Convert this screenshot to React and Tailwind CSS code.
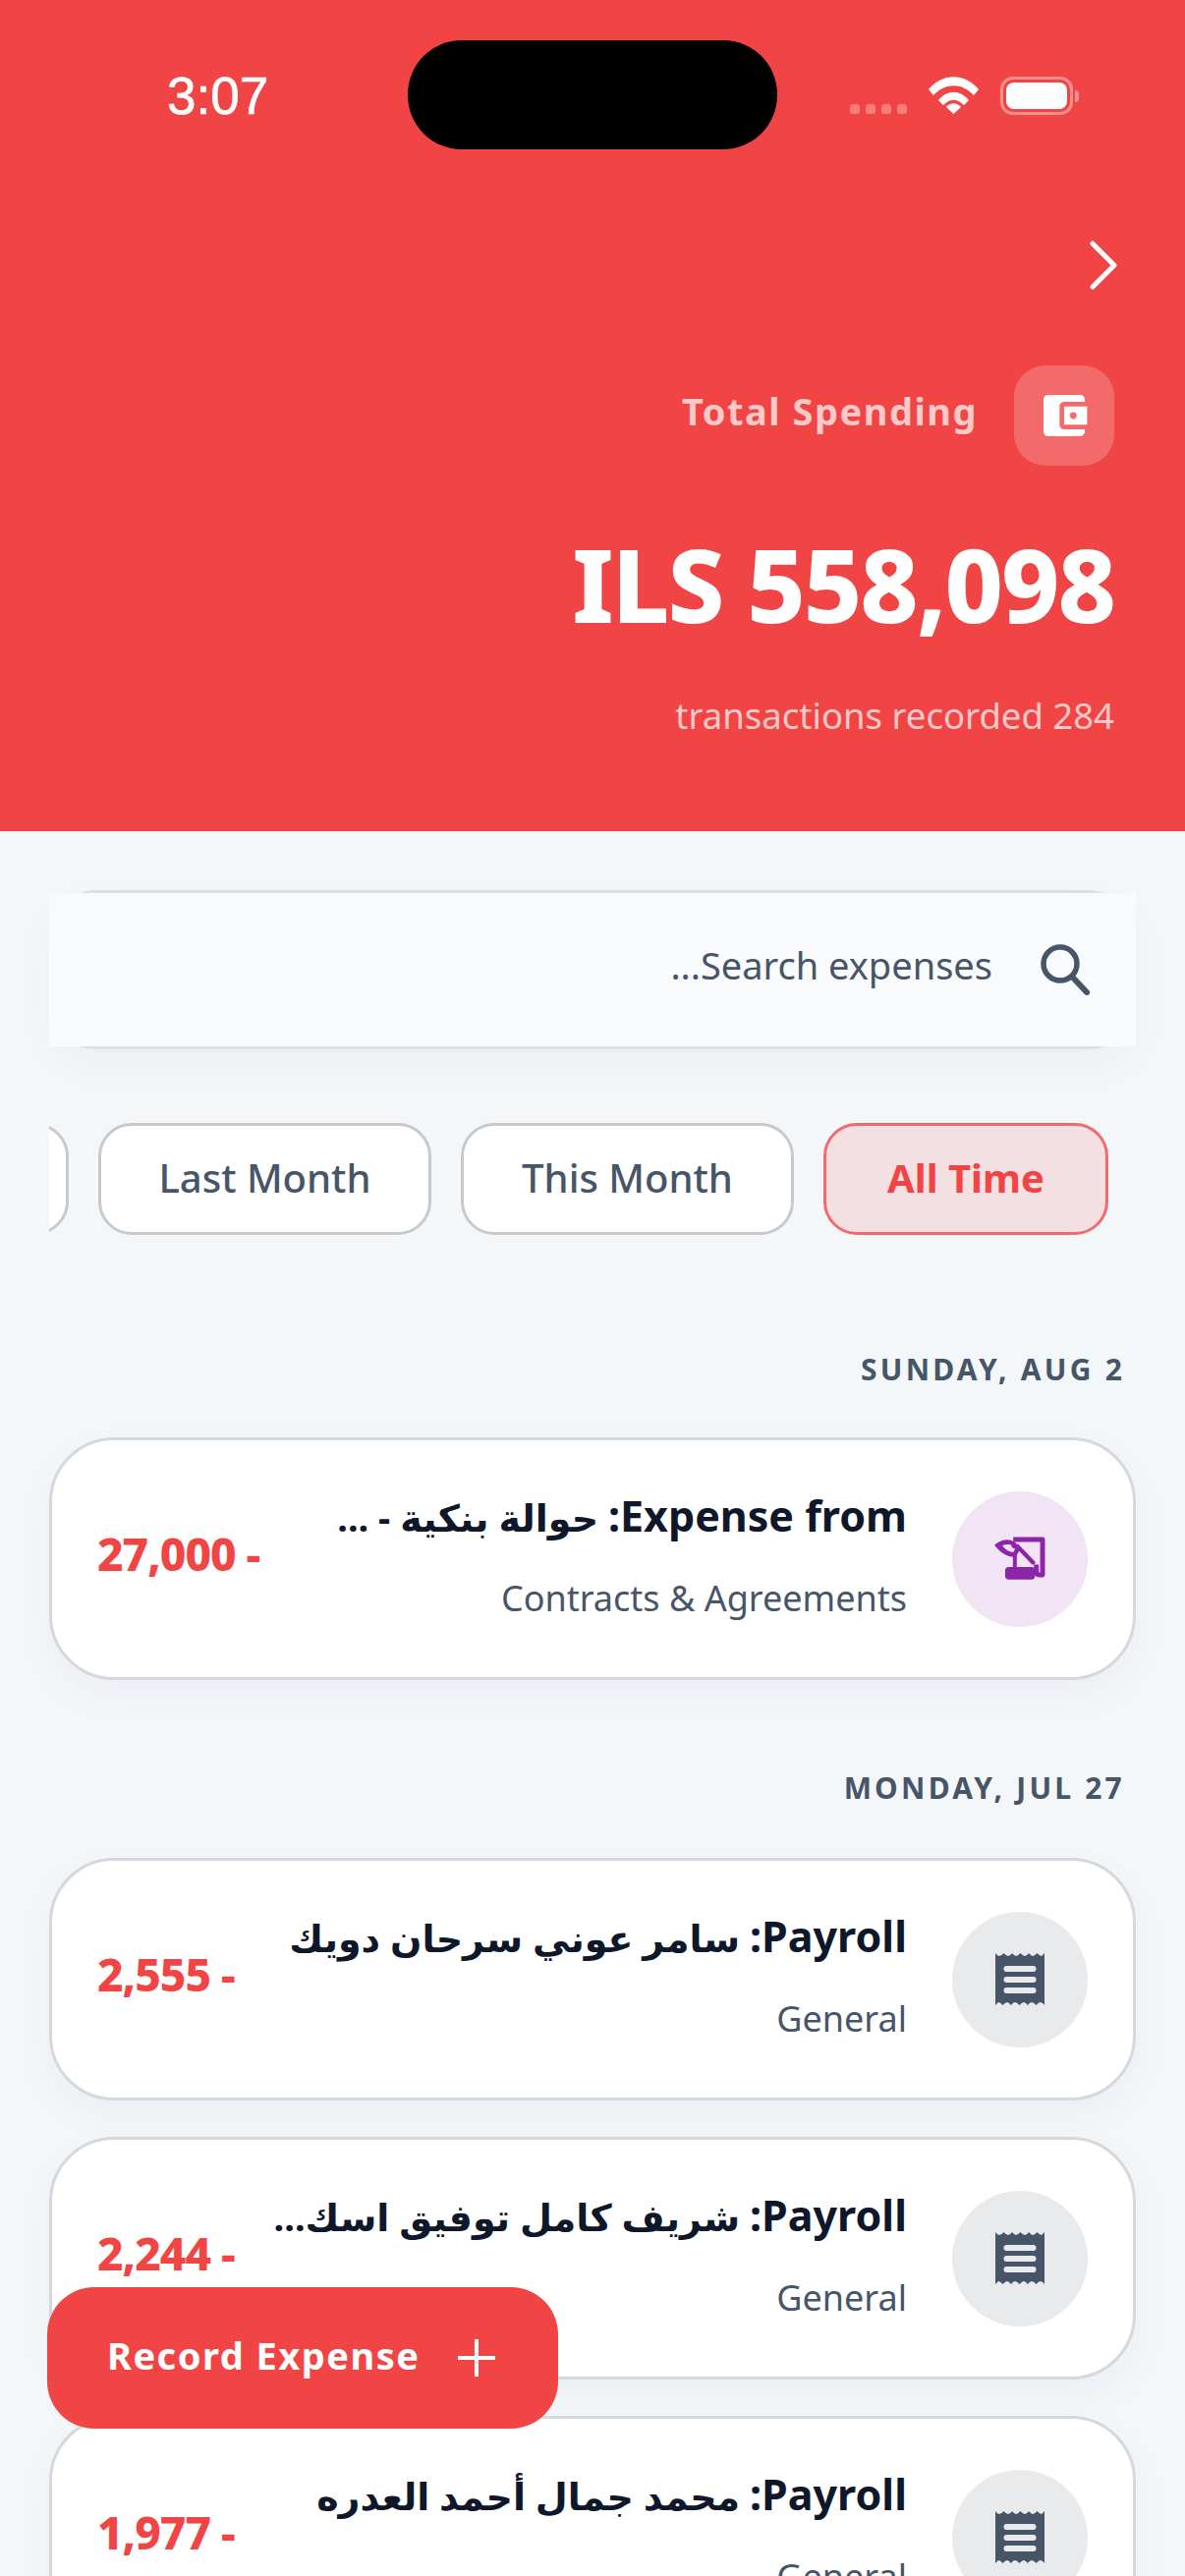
import React from "react";
import { MdAccountBalanceWallet } from "react-icons/md";

const FONT = "[font-family:'Noto_Sans','DejaVu_Sans',sans-serif]";

function Receipt() {
  return (
    <svg width="50" height="53" viewBox="0 0 50 53">
      <path
        fill="#475569"
        d="M0 0 Q2 3 4 3 T8.5 0 Q11 3 13 3 T17 0 Q19.5 3 21 3 T25.5 0 Q28 3 30 3 T34 0 Q36.5 3 38 3 T42.5 0 Q45 3 47 3 L50 0 V53 Q48 50 46 50 T41.5 53 Q39 50 37 50 T33 53 Q30.5 50 29 50 T24.5 53 Q22 50 20 50 T16 53 Q13.5 50 12 50 T7.5 53 Q5 50 3 50 L0 53 Z"
      />
      <rect x="8.5" y="13" width="33" height="6" rx="3" fill="#e9eaec" />
      <rect x="8.5" y="24" width="33" height="6" rx="3" fill="#e9eaec" />
      <rect x="8.5" y="35" width="33" height="6" rx="3" fill="#e9eaec" />
    </svg>
  );
}

function Quill() {
  return (
    <svg width="58" height="48" viewBox="205 190 175 145" className="mt-[-2px]">
      <path d="M272 205 H362 V314 H352 Q343 314 343 305 V282" fill="none" stroke="#8e24aa" strokeWidth="15" strokeLinejoin="round" />
      <rect x="247" y="290" width="92" height="38" rx="11" fill="#8e24aa" />
      <path d="M285 226 L333 276" stroke="#8e24aa" strokeWidth="13" strokeLinecap="round" />
      <path d="M277 250 V295" stroke="#8e24aa" strokeWidth="12" />
      <path d="M214 222 Q236 202 265 207 Q287 214 291 236 Q286 257 270 259 Q238 255 214 222 Z" fill="#8e24aa" />
      <path d="M238 224 Q254 218 266 222 L268 230 L278 234 L272 244 Q252 242 238 224 Z" fill="#f1e4f5" />
    </svg>
  );
}

function Card({ latin, arabic, sub, amount, purple }) {
  return (
    <div className="flex h-[247px] shrink-0 items-center rounded-[66px] border-[3px] border-[#d5d8dc] bg-white pl-[46px] pr-[46px] shadow-[0_16px_40px_rgba(15,23,42,0.04)]">
      <div
        className={`flex h-[138px] w-[138px] shrink-0 items-center justify-center rounded-full ${purple ? "bg-[#f1e4f5]" : "bg-[#e9eaec]"}`}
      >
        {purple ? <Quill /> : <Receipt />}
      </div>
      <div className="ml-[46px] mr-[46px] flex min-w-0 flex-1 flex-col gap-[23px] pb-[4px]">
        <div className="whitespace-nowrap text-[38px] font-bold leading-[60px] text-[#0f172a]">
          <span className="text-[43px]">{latin}</span> {arabic}
        </div>
        <div className="whitespace-nowrap text-[36px] leading-[60px] text-[#475569]">{sub}</div>
      </div>
      <div className="mb-[12px] shrink-0 text-[46px] font-extrabold leading-[60px] tracking-[-1px] text-[#f14545]">
        {amount}
      </div>
    </div>
  );
}

function Pill({ w, children, active }) {
  return (
    <div
      className={`flex h-[114px] shrink-0 items-center justify-center rounded-[34px] border-[3px] pb-[3px] text-[40px] ${
        active
          ? "border-[#f26a6a] bg-[#f4e0e3] font-bold text-[#f14545]"
          : "border-[#c9c9c9] bg-white font-medium text-[#475569]"
      } ${w}`}
    >
      {children}
    </div>
  );
}

export default function App() {
  return (
    <div className={`relative h-[2622px] w-[1206px] overflow-hidden bg-[#f4f7fa] ${FONT}`} dir="rtl">
      <header className="h-[846px] bg-[#f14545]" dir="ltr">
        <div className="flex h-[152px] pt-[41px]">
          <div className="w-[415px] pl-[170px] pt-[32px] text-[53px] leading-[50px] text-white [-webkit-text-stroke:0.7px_white] [font-family:'Liberation_Sans',sans-serif]">
            3:07
          </div>
          <div className="h-[111px] w-[376px] rounded-[55px] bg-black" />
          <div className="flex items-start pl-[74px] pt-[37px]">
            <div className="mt-[28px] flex gap-[6px]">
              <span className="h-[10px] w-[10px] rounded-[3px] bg-white/30" />
              <span className="h-[10px] w-[10px] rounded-[3px] bg-white/30" />
              <span className="h-[10px] w-[10px] rounded-[3px] bg-white/30" />
              <span className="h-[10px] w-[10px] rounded-[3px] bg-white/30" />
            </div>
            <svg className="ml-[22px]" width="51" height="38" viewBox="0 0 51 38">
              <path fill="white" d="M0 13 C14 -4 37 -4 51 13 L46 19 C34 6 17 6 5 19 Z" />
              <path fill="white" d="M10 24 C19 13 32 13 41 24 L36 29 C29 22 22 22 15 29 Z" />
              <path fill="white" d="M18 31 C22 26 29 26 33 31 L25.5 38 Z" />
            </svg>
            <div className="ml-[22px] flex items-center">
              <div className="h-[39px] w-[74px] rounded-[13px] border-[3px] border-white/40 p-[3px]">
                <div className="h-full w-full rounded-[8px] bg-white" />
              </div>
              <div className="ml-[2px] h-[12px] w-[4px] rounded-r-full bg-white/40" />
            </div>
          </div>
        </div>
        <div className="flex justify-end pr-[68px] pt-[93px]">
          <svg width="30" height="50" viewBox="0 0 30 50" fill="none">
            <path d="M4 3 L26 25 L4 47" stroke="white" strokeWidth="5" strokeLinecap="round" strokeLinejoin="round" />
          </svg>
        </div>
        <div className="mt-[77px] flex items-center justify-end gap-[37px] pr-[72px]">
          <span className="mb-[10px] text-[38px] font-bold tracking-[1.5px] text-[#fcc9c9]">Total Spending</span>
          <div className="flex h-[102px] w-[102px] items-center justify-center rounded-[32px] bg-white/20">
            <MdAccountBalanceWallet className="text-white" size={56} />
          </div>
        </div>
        <div className="mt-[65px] pr-[72px] text-right text-[103px] font-extrabold leading-[110px] tracking-[-2px] text-white">
          ILS 558,098
        </div>
        <div className="mt-[54px] pr-[72px] text-right text-[36.5px] leading-[50px] text-[#fcc9c9]">
          transactions recorded 284
        </div>
      </header>

      <main className="px-[50px]">
        <div className="mt-[60px] h-[162px] rounded-[48px] border-[3px] border-[#dcdfe3] shadow-[0_16px_40px_rgba(15,23,42,0.04)]">
          <div className="-mx-[3px] flex h-[156px] items-center gap-[47px] bg-[#f9fafc] pr-[47px]">
            <svg width="52" height="52" viewBox="0 0 52 52" fill="none" className="-scale-x-100">
              <circle cx="30" cy="20" r="17" stroke="#475569" strokeWidth="5.5" />
              <path d="M18 33 L3 49" stroke="#475569" strokeWidth="6" strokeLinecap="round" />
            </svg>
            <span className="mb-[10px] text-[38px] text-[#475569]">Search expenses...</span>
          </div>
        </div>

        <div className="mt-[75px] flex gap-[30px] overflow-hidden pr-[28px]">
          <Pill w="w-[290px]" active>All Time</Pill>
          <Pill w="w-[339px]">This Month</Pill>
          <Pill w="w-[339px]">Last Month</Pill>
          <Pill w="w-[339px]" />
        </div>

        <div className="mt-[117px] pr-[11px] text-right text-[30px] font-bold leading-[40px] tracking-[3.2px] text-[#475569]" dir="ltr">
          SUNDAY, AUG 2
        </div>
        <div className="mt-[49px]">
          <Card purple latin="Expense from:" arabic="حوالة بنكية - ..." sub="Contracts & Agreements" amount="- 27,000" />
        </div>

        <div className="mt-[90px] pr-[11px] text-right text-[30px] font-bold leading-[40px] tracking-[3.2px] text-[#475569]" dir="ltr">
          MONDAY, JUL 27
        </div>
        <div className="mt-[51px] flex flex-col gap-[37px]">
          <Card latin="Payroll:" arabic="سامر عوني سرحان دويك" sub="General" amount="- 2,555" />
          <Card latin="Payroll:" arabic="شريف كامل توفيق اسك..." sub="General" amount="- 2,244" />
          <Card latin="Payroll:" arabic="محمد جمال أحمد العدره" sub="General" amount="- 1,977" />
        </div>
      </main>

      <div className="absolute left-[48px] top-[2328px] flex h-[144px] w-[520px] items-center gap-[38px] rounded-[48px] bg-[#f14545] pl-[61px]" dir="ltr">
        <span className="mb-[6px] text-[38px] font-bold tracking-[1.5px] text-white">Record Expense</span>
        <svg width="38" height="38" viewBox="0 0 38 38">
          <path d="M19 1 V37 M1 19 H37" stroke="white" strokeWidth="4" strokeLinecap="round" />
        </svg>
      </div>
    </div>
  );
}
